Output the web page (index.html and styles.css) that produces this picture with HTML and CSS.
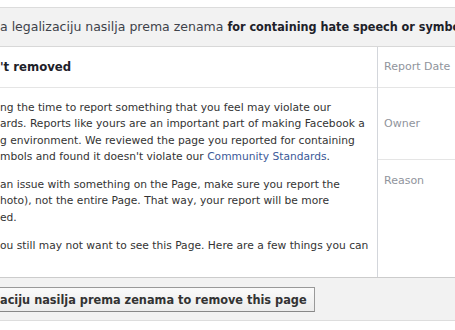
FILE: index.html
```html
<!DOCTYPE html>
<html lang="en">
<head>
    <meta charset="UTF-8">
    <title>Support Dashboard</title>
    <link rel="stylesheet" href="styles.css">
</head>
<body>
    <div class="page">
        <div class="title">
            a legalizaciju nasilja prema zenama <b>for containing hate speech or symbols</b>
        </div>
        <div class="report">
            <div class="main">
                <div class="status">'t removed</div>
                <div class="body">
                    <p>ng the time to report something that you feel may violate our<br>
                    ards. Reports like yours are an important part of making Facebook a<br>
                    g environment. We reviewed the page you reported for containing<br>
                    mbols and found it doesn't violate our <a href="#">Community Standards</a>.</p>
                    <p>an issue with something on the Page, make sure you report the<br>
                    hoto), not the entire Page. That way, your report will be more<br>
                    ed.</p>
                    <p>ou still may not want to see this Page. Here are a few things you can</p>
                </div>
            </div>
            <div class="side">
                <div class="row date">Report Date</div>
                <div class="row owner">Owner</div>
                <div class="row reason">Reason</div>
            </div>
        </div>
        <div class="actions">
            <button class="button">aciju nasilja prema zenama to remove this page</button>
        </div>
    </div>
</body>
</html>
```

FILE: styles.css
```css
body {
    font-family: "DejaVu Sans", Tahoma, sans-serif;
    font-size: 10.7px;
    color: #333;
    margin: 0;
    padding: 0;
    background-color: #fff;
}
.page {
    margin-top: 7px;
    border-top: 1px solid #dcdcdc;
    overflow: hidden;
    white-space: nowrap;
}
.title {
    background-color: #f2f2f2;
    border-bottom: 1px solid #d8d8d8;
    height: 38px;
    line-height: 38px;
    font-size: 12.5px;
    color: #3e424a;
}
.title b {
    font-family: "DejaVu Sans Condensed", "DejaVu Sans", sans-serif;
    color: #1d2129;
}
.report {
    display: grid;
    grid-template-columns: 378px 1fr;
    height: 230px;
}
.main {
    border-right: 1px solid #d3d6db;
}
.status {
    height: 40px;
    line-height: 40px;
    font-family: "DejaVu Sans Condensed", "DejaVu Sans", sans-serif;
    font-size: 13px;
    font-weight: bold;
    color: #1d2129;
    border-bottom: 1px solid #e5e5e5;
}
.body {
    padding-top: 12px;
}
.body p {
    margin: 0 0 12px 0;
    line-height: 16.3px;
}
.body a {
    color: #3b5998;
    text-decoration: none;
}
.row {
    padding-left: 6px;
    color: #90949c;
    font-size: 11px;
    border-bottom: 1px solid #e5e5e5;
}
.date {
    height: 40px;
    line-height: 40px;
}
.owner {
    height: 71px;
    line-height: 71px;
}
.reason {
    border-bottom: none;
    padding-top: 14px;
}
.actions {
    background-color: #f2f2f2;
    border-top: 1px solid #ccc;
    border-bottom: 1px solid #ddd;
    height: 44px;
    padding-top: 9px;
    box-sizing: border-box;
}
.button {
    font-family: "DejaVu Sans Condensed", "DejaVu Sans", sans-serif;
    font-size: 12.6px;
    font-weight: bold;
    color: #333;
    background: linear-gradient(#fafafa, #ececec);
    border: 1px solid #999;
    border-bottom-color: #888;
    height: 25px;
    padding: 0 7px 0 8px;
    margin-left: -9px;
    cursor: pointer;
}
```
